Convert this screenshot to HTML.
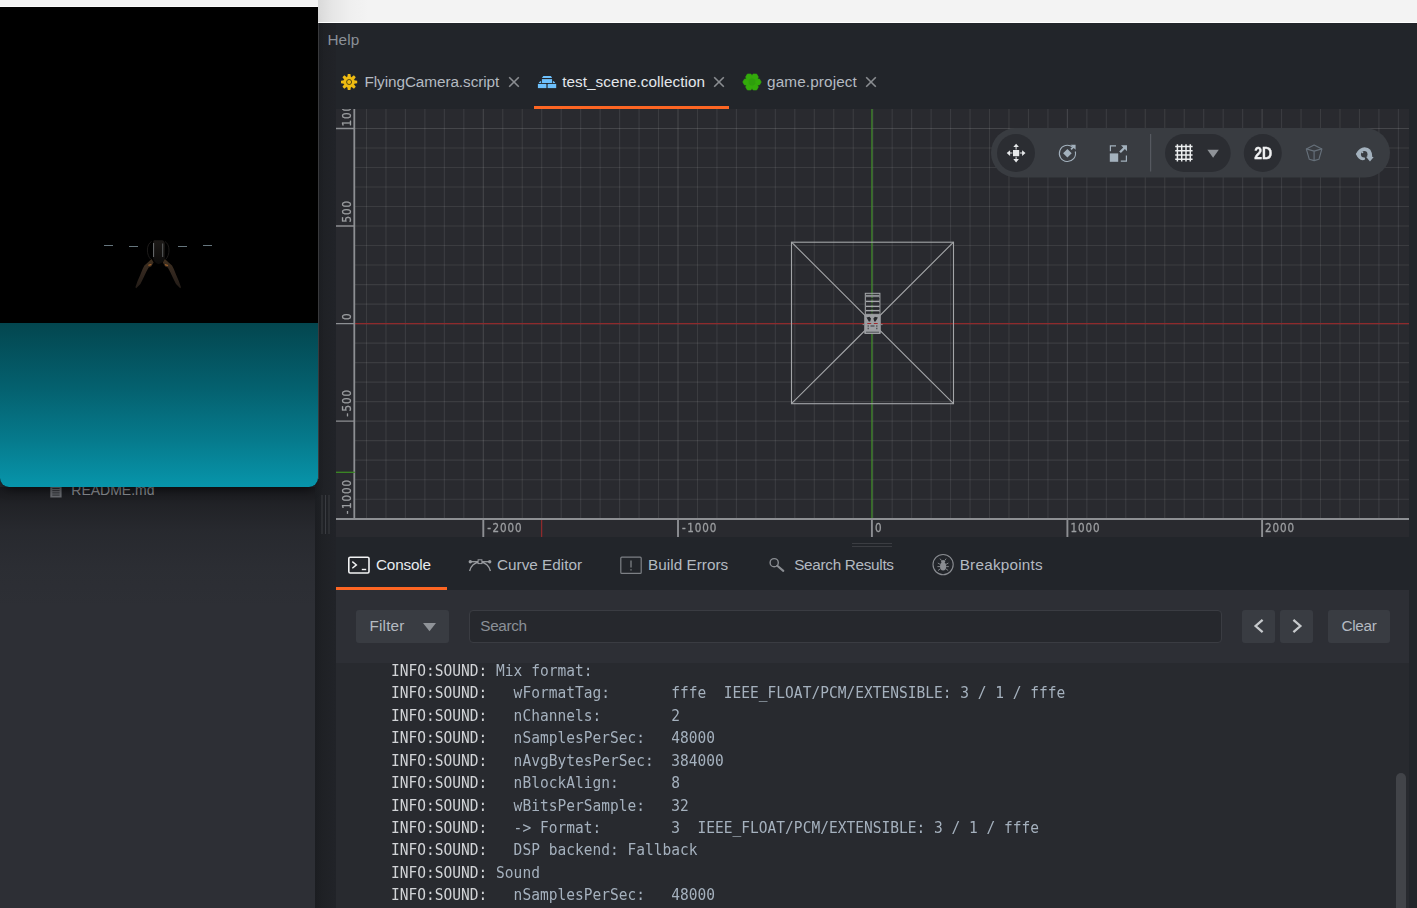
<!DOCTYPE html>
<html lang="en">
<head>
<meta charset="utf-8">
<title>Defold Editor</title>
<style>
html,body{margin:0;padding:0;}
body{width:1417px;height:908px;overflow:hidden;position:relative;background:#22252a;font-family:"Liberation Sans",sans-serif;color:#b4bac1;}
.abs{position:absolute;}
#topL{left:0;top:0;width:318px;height:7px;background:#f3f3f3;border-bottom:1px solid #fbfbfb;box-sizing:border-box;}
#topR{left:318px;top:0;width:1099px;height:23px;background:linear-gradient(90deg,#d9d9d9 0,#e6e6e6 14px,#efefef 32px,#f3f3f3 50px);border-bottom:1px solid #fff;box-sizing:border-box;}
#leftPanel{left:0;top:487px;width:315px;height:421px;background:#2d2f35;}
#leftShadow{left:0;top:487px;width:315px;height:120px;background:linear-gradient(180deg,rgba(20,21,24,.85) 0,rgba(24,25,28,.58) 18px,rgba(28,30,34,.32) 45px,rgba(30,32,36,.12) 80px,rgba(45,47,53,0) 120px);}
#gameWin{left:0;top:7px;width:318px;height:480px;background:#000;border-radius:0 0 9px 9px;overflow:hidden;box-shadow:0 8px 10px -6px rgba(0,0,0,.55);}
#gameWin .sea{position:absolute;left:0;top:316px;width:318px;height:164px;background:linear-gradient(180deg,#03464f 0,#04616f 40%,#067b8d 72%,#0795ab 100%);}
#edgeL{left:315px;top:22px;width:21px;height:886px;background:linear-gradient(90deg,#1b1d21 0,#1f2125 8px,#212328 20px);}
#menu{left:327.4px;top:31px;font-size:15.3px;letter-spacing:.1px;color:#8b9097;line-height:17px;}
.tab{position:absolute;top:73px;font-size:15.3px;line-height:18px;white-space:nowrap;color:#b4bac1;}
.tab.sel{color:#e4e8ec;}
.x{position:absolute;top:76px;width:12px;height:12px;}
#tabline{left:534px;top:106px;width:195px;height:3px;background:#fd6623;}
#scene{left:336px;top:109px;width:1073px;height:428px;background:#292a2f;overflow:hidden;}
.btab{position:absolute;top:556px;font-size:15.3px;line-height:18px;white-space:nowrap;color:#b4bac1;}
.btab.sel{color:#e9ecef;}
#btabline{left:336px;top:587px;width:111px;height:3px;background:#fd6623;}
#ctool{left:336px;top:590px;width:1073px;height:73px;background:#2d2f35;}
#cbody{left:336px;top:663px;width:1073px;height:245px;background:#282a2f;overflow:hidden;}
.btn{position:absolute;background:#393c42;border-radius:3px;color:#b4bac1;font-size:15.3px;}
#search{position:absolute;left:133px;top:20px;width:753px;height:33px;background:#26282d;border:1px solid #3a3c42;border-radius:4px;box-sizing:border-box;}
#console{position:absolute;left:54.7px;top:-3.9px;margin:0;font-family:"DejaVu Sans Mono","Liberation Mono",monospace;font-size:14.55px;line-height:21.4286px;color:#a5b1be;white-space:pre;will-change:transform;transform:scaleY(1.05);transform-origin:0 0;}
#console b{font-weight:normal;color:#d2d4d7;}
#thumb{position:absolute;left:1060px;top:110px;width:10px;height:160px;border-radius:5px;background:#424449;}
</style>
</head>
<body>
<div class="abs" id="leftPanel"></div>
<div class="abs" id="edgeL"></div>
<div class="abs" id="topL"></div>
<div class="abs" id="topR"></div>
<div class="abs" id="menu">Help</div>

<!-- editor tabs -->
<svg class="abs" style="left:340px;top:73px" width="18" height="18" viewBox="0 0 18 18"><g transform="translate(9.1 9)"><g fill="#efbc12"><circle r="5.6"/><g><path d="M-1.8 -5L-1.3 -8.1H1.3L1.8 -5ZM-1.8 5L-1.3 8.1H1.3L1.8 5ZM-5 -1.8L-8.1 -1.3V1.3L-5 1.8ZM5 -1.8L8.1 -1.3V1.3L5 1.8Z"/></g><g transform="rotate(45)"><path d="M-1.8 -5L-1.3 -8.1H1.3L1.8 -5ZM-1.8 5L-1.3 8.1H1.3L1.8 5ZM-5 -1.8L-8.1 -1.3V1.3L-5 1.8ZM5 -1.8L8.1 -1.3V1.3L5 1.8Z"/></g></g><circle r="2.5" fill="none" stroke="#54470f" stroke-width="1"/></g></svg>
<div class="tab" style="left:364.5px;letter-spacing:-.07px">FlyingCamera.script</div>
<svg class="x" style="left:508px" viewBox="0 0 12 12"><path d="M1.2 1.2L10.8 10.8M10.8 1.2L1.2 10.8" stroke="#8a8d91" stroke-width="1.6" fill="none"/></svg>
<svg class="abs" style="left:537px;top:75px" width="20" height="14" viewBox="537 75 20 14"><g fill="#6dc0fc"><path d="M543.3 75.9H550.9L552.1 78H541.9Z"/><rect x="541.9" y="79.1" width="10.2" height="3.9"/><path d="M541.1 81V83H538.7C539.2 82 540 81.2 541.1 81ZM552.9 81V83H555.3C554.8 82 554 81.2 552.9 81Z"/><rect x="537.9" y="83.9" width="8.3" height="4.2"/><rect x="547.9" y="83.9" width="8.3" height="4.2"/><rect x="546.2" y="84.2" width="1.7" height="3.9" opacity=".35"/></g></svg>
<div class="tab sel" style="left:562.2px;letter-spacing:.04px">test_scene.collection</div>
<svg class="x" style="left:713px" viewBox="0 0 12 12"><path d="M1.2 1.2L10.8 10.8M10.8 1.2L1.2 10.8" stroke="#8a8d91" stroke-width="1.6" fill="none"/></svg>
<svg class="abs" style="left:742px;top:72px" width="20" height="20" viewBox="0 0 20 20"><g transform="translate(10 10)"><g fill="#33aa0b" stroke="#33aa0b" stroke-width=".6" stroke-linejoin="round"><polygon points="5.54,3.20 0.00,6.40 -5.54,3.20 -5.54,-3.20 -0.00,-6.40 5.54,-3.20"/><polygon points="9.25,0.00 7.48,3.07 3.93,3.07 2.15,0.00 3.92,-3.07 7.48,-3.07"/><polygon points="6.40,4.94 4.63,8.01 1.08,8.01 -0.70,4.94 1.07,1.86 4.63,1.86"/><polygon points="0.70,4.94 -1.07,8.01 -4.62,8.01 -6.40,4.94 -4.62,1.86 -1.07,1.86"/><polygon points="-2.15,0.00 -3.92,3.07 -7.47,3.07 -9.25,0.00 -7.48,-3.07 -3.92,-3.07"/><polygon points="0.70,-4.94 -1.08,-1.86 -4.63,-1.86 -6.40,-4.94 -4.63,-8.01 -1.08,-8.01"/><polygon points="6.40,-4.94 4.63,-1.86 1.08,-1.86 -0.70,-4.94 1.07,-8.01 4.63,-8.01"/></g><circle r="3.4" fill="#2e9f0c"/></g></svg>
<div class="tab" style="left:767px;letter-spacing:.13px">game.project</div>
<svg class="x" style="left:865px" viewBox="0 0 12 12"><path d="M1.2 1.2L10.8 10.8M10.8 1.2L1.2 10.8" stroke="#8a8d91" stroke-width="1.6" fill="none"/></svg>
<div class="abs" id="tabline"></div>

<!-- scene -->
<div class="abs" id="scene"><svg width="1073" height="428" viewBox="0 0 1073 428" style="position:absolute;left:0;top:0;will-change:transform">
<rect width="1073" height="428" fill="#292a2f"/>
<path d="M30.48 0V410.0M49.95 0V410.0M69.42 0V410.0M88.89 0V410.0M108.36 0V410.0M127.83 0V410.0M166.77 0V410.0M186.24 0V410.0M205.71 0V410.0M225.18 0V410.0M244.65 0V410.0M264.12 0V410.0M283.59 0V410.0M303.06 0V410.0M322.53 0V410.0M361.47 0V410.0M380.94 0V410.0M400.41 0V410.0M419.88 0V410.0M439.35 0V410.0M458.82 0V410.0M478.29 0V410.0M497.76 0V410.0M517.23 0V410.0M556.17 0V410.0M575.64 0V410.0M595.11 0V410.0M614.58 0V410.0M634.05 0V410.0M653.52 0V410.0M672.99 0V410.0M692.46 0V410.0M711.93 0V410.0M750.87 0V410.0M770.34 0V410.0M789.81 0V410.0M809.28 0V410.0M828.75 0V410.0M848.22 0V410.0M867.69 0V410.0M887.16 0V410.0M906.63 0V410.0M945.57 0V410.0M965.04 0V410.0M984.51 0V410.0M1003.98 0V410.0M1023.45 0V410.0M1042.92 0V410.0M1062.39 0V410.0" stroke="rgba(255,255,255,.085)" stroke-width="1.1" fill="none"/>
<path d="M18.3 390.19H1073M18.3 370.68H1073M18.3 351.17H1073M18.3 331.66H1073M18.3 312.15H1073M18.3 292.64H1073M18.3 273.13H1073M18.3 253.62H1073M18.3 234.11H1073M18.3 195.09H1073M18.3 175.58H1073M18.3 156.07H1073M18.3 136.56H1073M18.3 117.05H1073M18.3 97.54H1073M18.3 78.03H1073M18.3 58.52H1073M18.3 39.01H1073" stroke="rgba(255,255,255,.085)" stroke-width="1.1" fill="none"/>
<path d="M147.30 0V410.0M342.00 0V410.0M536.70 0V410.0M731.40 0V410.0M926.10 0V410.0" stroke="rgba(255,255,255,.135)" stroke-width="1.1" fill="none"/>
<path d="M18.3 409.70H1073M18.3 214.60H1073M18.3 19.50H1073" stroke="rgba(255,255,255,.135)" stroke-width="1.1" fill="none"/>
<path d="M18.3 214.6H1073" stroke="#8e2a2c" stroke-width="1.2"/>
<path d="M535.9 0V410.0" stroke="#3c8a24" stroke-width="1.2"/>
<g stroke="#a3a5a8" stroke-width="1.1" fill="none"><rect x="455.5" y="133.2" width="162.0" height="161.5"/><path d="M455.5 133.2L617.5 294.7M617.5 133.2L455.5 294.7"/></g>
<g id="model" transform="translate(-336 -109)">
<rect x="865.3" y="293.3" width="14.6" height="21" fill="rgba(163,165,168,0.10)" stroke="#a6a8ab" stroke-width="1"/>
<path d="M866 295.9H879.5" stroke="#8d8f93" stroke-width="1.9" fill="none"/>
<path d="M866 301.3H879.5M866 306.3H879.5M866 310.6H879.5" stroke="#a6a8ab" stroke-width="1.3" fill="none"/>
<path d="M866 298.8H879.5M866 304H879.5M866 308.6H879.5M866 312.7H879.5" stroke="#202226" stroke-width="1.5" opacity=".75" fill="none"/>
<rect x="864.2" y="314.6" width="16.6" height="19.3" rx="1" fill="#9c9ea2"/>
<path d="M866.5 317.6L869.5 316.8L871 318.5L870.2 321.6L868.8 321.4ZM877.9 317.6L874.9 316.8L873.4 318.5L874.2 321.6L875.6 321.4Z" fill="#26282c"/>
<path d="M867.3 323.5H871.2M873.8 323.5H877.7" stroke="#a02a2e" stroke-width="1.2"/>
<path d="M867.5 326H869M870.5 326H874.5M876 326H877.5M867.5 328.5H869M876 328.5H877.5" stroke="#55575c" stroke-width="1.3"/>
<path d="M866 332.2H879" stroke="#3a3c41" stroke-width=".8"/>
<path d="M862.6 324.6H864.2M880.8 324.6H882.6" stroke="#8c8e92" stroke-width="1"/>
</g>

<rect x="0" y="0" width="18.3" height="428" fill="#292a2f"/>
<rect x="0" y="410.0" width="1073" height="18.0" fill="#292a2f"/>
<path d="M18.3 0V411.0M0 410.0H1073" stroke="#8d8f93" stroke-width="1.8" fill="none"/>
<path d="M0 19.50H18.3M0 117.05H18.3M0 214.60H18.3M0 312.15H18.3M0 409.70H18.3" stroke="#8d8f93" stroke-width="1.4" fill="none"/>
<path d="M147.30 410.0V428M342.00 410.0V428M535.90 410.0V428M731.40 410.0V428M926.10 410.0V428" stroke="#8d8f93" stroke-width="1.9" fill="none"/>
<path d="M0 363.3H18.8" stroke="#3c8a24" stroke-width="1.3"/>
<path d="M205.6 411.0V428" stroke="#8e2a2c" stroke-width="1.3"/>
<g font-family="'DejaVu Sans','Liberation Sans',sans-serif" font-size="11.8" fill="#9c9ea1" stroke="#9c9ea1" stroke-width=".3" letter-spacing="1.02">
<text transform="translate(151.2 423.1) scale(.88 1)">-<tspan dx="0.7">2000</tspan></text>
<text transform="translate(345.9 423.1) scale(.88 1)">-<tspan dx="0.7">1000</tspan></text>
<text transform="translate(538.9 423.1) scale(.88 1)">0</text>
<text transform="translate(734.4 423.1) scale(.88 1)">1000</text>
<text transform="translate(929.1 423.1) scale(.88 1)">2000</text>
<text transform="translate(15.3 17.6) rotate(-90) scale(.88 1)">1000</text>
<text transform="translate(15.3 113.5) rotate(-90) scale(.88 1)">500</text>
<text transform="translate(15.3 211.0) rotate(-90) scale(.88 1)">0</text>
<text transform="translate(15.3 307.8) rotate(-90) scale(.88 1)">-<tspan dx="0.7">500</tspan></text>
<text transform="translate(15.3 405.3) rotate(-90) scale(.88 1)">-<tspan dx="0.7">1000</tspan></text>
</g>
</svg><svg width="1073" height="428" viewBox="336 109 1073 428" style="position:absolute;left:0;top:0">
<rect x="991" y="128" width="399" height="49.5" rx="24.75" fill="#393c41"/>
<circle cx="1016" cy="153" r="19" fill="#2b2d32"/>
<!-- move -->
<g fill="#e6e8ea" stroke="none">
<rect x="1013" y="150" width="6.2" height="6.2"/>
<path d="M1016.1 143.700L1018.900 147.100H1016.600V149.400H1015.600V147.100H1013.300Z"/>
<path d="M1016.100 162.500L1018.900 159.100H1016.600V156.800H1015.600V159.100H1013.300Z"/>
<path d="M1006.700 153.100L1010.100 150.300V152.600H1012.400V153.600H1010.100V155.900Z"/>
<path d="M1025.500 153.100L1022.100 150.300V152.600H1019.800V153.600H1022.100V155.900Z"/>
</g>
<!-- rotate -->
<g fill="#a3b1bd">
<path d="M1072.6 147.2A8.1 8.1 0 1 0 1075.3 151.5" fill="none" stroke="#a3b1bd" stroke-width="1.1"/>
<path d="M1067.4 148.9L1071.7 153.2L1067.4 157.5L1063.1 153.2Z"/>
<path d="M1070.6 144.8H1075.6V149.8L1073.7 147.900L1071.6 150L1070.4 148.800L1072.5 146.700Z"/>
</g>
<!-- scale -->
<g fill="#a3b1bd">
<rect x="1109.8" y="153.4" width="8.4" height="8.4"/>
<path d="M1109.8 151.2V145.2H1116V146.4H1111V151.2ZM1127 155.5V161.8H1120.8V160.6H1125.8V155.5Z"/>
<path d="M1121 145.2H1127V151.2L1124.9 149.1L1120.9 153.1L1119.2 151.4L1123.2 147.4Z"/>
</g>
<rect x="1150" y="134" width="1.2" height="37.5" fill="#565960"/>
<rect x="1165" y="134" width="65.7" height="38" rx="19" fill="#2b2d32"/>
<path d="M1177.4 144.2V161.4M1181.7 144.2V161.4M1186 144.2V161.4M1190.3 144.2V161.4M1175.2 146.4H1192.6M1175.2 150.7H1192.6M1175.2 155H1192.6M1175.2 159.3H1192.6" stroke="#eceeef" stroke-width="1.5" fill="none"/>
<path d="M1207.4 149.8H1218.8L1213.1 157.8Z" fill="#8f9398"/>
<circle cx="1262.8" cy="153" r="19" fill="#2b2d32"/>
<text x="1254.3" y="159.2" font-family="'Liberation Sans',sans-serif" font-weight="bold" font-size="15.8" fill="#f0f1f2" stroke="#f0f1f2" stroke-width=".35" textLength="18" lengthAdjust="spacingAndGlyphs">2D</text>
<!-- cube -->
<g fill="none" stroke="#66707a" stroke-width="1.15" stroke-linejoin="round">
<path d="M1306.300 148.900L1314.100 145.100L1321.900 148.900L1318.900 159.300L1314.100 160.600L1309.300 159.300Z"/>
<path d="M1306.300 148.900L1314.100 151.100L1321.900 148.900M1314.100 151.100V160.600"/>
</g>
<!-- eye rotate -->
<g>
<path d="M1355.800 153.900Q1359.400 147.200 1364.600 147.200Q1372.200 147.400 1372.300 157.100L1367 157.100Q1365.600 160.200 1362.600 160.200Q1358.400 159.600 1355.800 153.900Z" fill="#a3b1bd"/>
<circle cx="1364.200" cy="154.300" r="3.250" fill="#393c41"/>
<path d="M1364.600 156.700H1367.600L1367 160.700H1365.500Z" fill="#393c41"/>
<circle cx="1362.300" cy="152.200" r="1.050" fill="#a3b1bd"/>
<path d="M1366.200 157.100H1373.700L1369.950 161.500Z" fill="#a3b1bd"/>
</g>
</svg>
</div>

<!-- bottom tabs -->
<div class="abs" style="left:852px;top:543px;width:40px;height:1px;background:#3b3d42"></div>
<div class="abs" style="left:852px;top:546px;width:40px;height:1px;background:#3b3d42"></div>
<svg class="abs" style="left:346px;top:554px" width="26" height="22" viewBox="346 554 26 22"><rect x="348.8" y="557.2" width="20.2" height="15.8" rx="1.4" fill="none" stroke="#f2f3f4" stroke-width="1.6"/><path d="M352.3 561.6L356.4 564.9L352.3 568.2" fill="none" stroke="#f2f3f4" stroke-width="1.4"/><path d="M361.8 569.5H366.2" stroke="#f2f3f4" stroke-width="1.4"/></svg>
<div class="btab sel" style="left:376px;letter-spacing:-.2px">Console</div>
<svg class="abs" style="left:466px;top:556px" width="28" height="18" viewBox="466 556 28 18"><g fill="none" stroke="#999ca0" stroke-width="1.3"><path d="M469.6 571C470.6 566.5 474.5 562 480 562C485.5 562 489.4 566.5 490.4 571"/><path d="M470.5 561.7H489.5"/></g><circle cx="470.3" cy="561.7" r="1.7" fill="#999ca0"/><circle cx="489.7" cy="561.7" r="1.7" fill="#999ca0"/><rect x="478.1" y="559.8" width="3.8" height="3.8" fill="#22252a" stroke="#999ca0" stroke-width="1"/></svg>
<div class="btab" style="left:497px;letter-spacing:0px">Curve Editor</div>
<svg class="abs" style="left:618px;top:554px" width="26" height="22" viewBox="618 554 26 22"><rect x="620.8" y="557.2" width="20.4" height="16.2" rx="1" fill="none" stroke="#7d8085" stroke-width="1.2"/><path d="M631 560.6V567.6M631 569.2V570.6" stroke="#7d8085" stroke-width="1.3"/></svg>
<div class="btab" style="left:648px;letter-spacing:.03px">Build Errors</div>
<svg class="abs" style="left:767px;top:555px" width="20" height="20" viewBox="767 555 20 20"><circle cx="774.2" cy="562.7" r="4.1" fill="none" stroke="#8a8d92" stroke-width="1.4"/><path d="M777.3 565.8L783.3 570.9" stroke="#8a8d92" stroke-width="2.1" stroke-linecap="round"/></svg>
<div class="btab" style="left:794.2px;letter-spacing:-.3px">Search Results</div>
<svg class="abs" style="left:931px;top:553px" width="24" height="24" viewBox="931 553 24 24"><circle cx="943.1" cy="564.6" r="10.1" fill="none" stroke="#8a8d92" stroke-width="1.1"/><g fill="#8a8d92"><ellipse cx="943.1" cy="566.4" rx="3.1" ry="4.1"/><ellipse cx="943.1" cy="561.6" rx="2.1" ry="1.6"/></g><path d="M941.5 560.6L940 558.6M944.7 560.6L946.2 558.6M940.2 564.4L937.8 563M946 564.4L948.4 563M940 566.6H937.4M946.2 566.6H948.8M940.3 568.8L938 570.6M945.9 568.8L948.2 570.6" stroke="#8a8d92" stroke-width=".9" fill="none"/></svg>
<div class="btab" style="left:959.7px;letter-spacing:.22px">Breakpoints</div>
<div class="abs" id="btabline"></div>

<div class="abs" id="ctool">
  <div class="btn" style="left:20px;top:20px;width:93px;height:33px;"><span style="position:absolute;left:13.4px;top:7px;line-height:18px;letter-spacing:.2px">Filter</span><svg style="position:absolute;left:66px;top:12px" width="15" height="10" viewBox="0 0 15 10"><path d="M1 1H14L7.5 9.3Z" fill="#8f9398"/></svg></div>
  <div id="search"><span style="position:absolute;left:10.3px;top:6px;font-size:15.3px;line-height:18px;color:#8b9097;letter-spacing:-.35px">Search</span></div>
  <div class="btn" style="left:906px;top:20px;width:33px;height:33px;"><svg style="position:absolute;left:10px;top:8px" width="14" height="16" viewBox="0 0 14 16"><path d="M10.6 1.8L3.6 8L10.6 14.2" fill="none" stroke="#c6c9cc" stroke-width="2.3"/></svg></div>
  <div class="btn" style="left:944px;top:20px;width:33px;height:33px;"><svg style="position:absolute;left:10px;top:8px" width="14" height="16" viewBox="0 0 14 16"><path d="M3.4 1.8L10.4 8L3.4 14.2" fill="none" stroke="#c6c9cc" stroke-width="2.3"/></svg></div>
  <div class="btn" style="left:992px;top:20px;width:62px;height:33px;"><span style="position:absolute;left:13.4px;top:7px;line-height:18px;letter-spacing:-.25px">Clear</span></div>
</div>
<div class="abs" id="cbody">
<pre id="console"><b>INFO:SOUND:</b> Mix format:
<b>INFO:SOUND:</b>   wFormatTag:       fffe  IEEE_FLOAT/PCM/EXTENSIBLE: 3 / 1 / fffe
<b>INFO:SOUND:</b>   nChannels:        2
<b>INFO:SOUND:</b>   nSamplesPerSec:   48000
<b>INFO:SOUND:</b>   nAvgBytesPerSec:  384000
<b>INFO:SOUND:</b>   nBlockAlign:      8
<b>INFO:SOUND:</b>   wBitsPerSample:   32
<b>INFO:SOUND:</b>   -&gt; Format:        3  IEEE_FLOAT/PCM/EXTENSIBLE: 3 / 1 / fffe
<b>INFO:SOUND:</b>   DSP backend: Fallback
<b>INFO:SOUND:</b> Sound
<b>INFO:SOUND:</b>   nSamplesPerSec:   48000</pre>
<div id="thumb"></div>
</div>

<!-- readme row (partly covered by the game window) -->
<div class="abs" id="leftShadow"></div>
<svg class="abs" style="left:49px;top:483px" width="14" height="16" viewBox="49 483 14 16"><path d="M50.300 483.500H58.500L61.600 486.600V497.600H50.300Z" fill="#66686d"/><path d="M52.300 488.500H59.600M52.300 490.700H59.600M52.300 492.900H59.600M52.300 495.100H59.600" stroke="#2b2d32" stroke-width="1"/></svg>
<div class="abs" style="left:71.300px;top:481px;font-size:14px;line-height:18px;color:#85888d;letter-spacing:0px">README.md</div>
<svg class="abs" style="left:320px;top:494px" width="12" height="42" viewBox="320 494 12 42"><path d="M322 495V534M325.500 495V534M329 495V534" stroke="#3a3c41" stroke-width="1"/></svg>
<!-- game window -->
<div class="abs" id="gameWin"><div class="sea"></div>
<svg style="position:absolute;left:0;top:0" width="318" height="480" viewBox="0 7 318 480">
<defs><linearGradient id="body" x1="0" y1="0" x2="0" y2="1"><stop offset="0" stop-color="#1d1a18"/><stop offset="1" stop-color="#0c0b0a"/></linearGradient>
<linearGradient id="arm" x1="0" y1="0" x2="0" y2="1"><stop offset="0" stop-color="#40301f"/><stop offset=".4" stop-color="#34281f"/><stop offset="1" stop-color="#231c17"/></linearGradient></defs>
<path d="M104 245.5H113M203 245.5H212M129 246.5H138M178 246.5H187" stroke="#66767e" stroke-width="1.1"/>
<path d="M151.5 241.5C149 243 147.4 246 147.4 250C147.4 254 148.6 257 150.5 259M165 241.5C167.500 243 169 246 169 250C169 254 167.800 257 166 259" fill="none" stroke="#1c1a19" stroke-width="1"/>
<path d="M154 240.200H162.500C164.500 241 165 243 165 246V258C164 261.500 161 264 158 264C155.500 263 153.500 261 153 258V244C153 242 153.300 241 154 240.200Z" fill="url(#body)"/>
<path d="M153.600 243V257" stroke="#8b8f92" stroke-width="1" opacity=".75"/>
<path d="M162.700 243.500V257" stroke="#7b7f82" stroke-width="1" opacity=".7"/>
<path d="M151.5 259.0L153.6 262.6L151.2 266.6L148.6 267.6L146.2 272.0L143.4 278.0L140.4 284.0L136.2 288.2L135.4 287.2L137.6 281.0L140.2 275.0L142.6 269.0L144.4 265.4L147.8 262.4Z" fill="url(#arm)"/>
<path d="M164.9 259.0L162.8 262.6L165.2 266.6L167.8 267.6L170.2 272.0L173.0 278.0L176.0 284.0L180.2 288.2L181.0 287.2L178.8 281.0L176.2 275.0L173.8 269.0L172.0 265.4L168.6 262.4Z" fill="url(#arm)"/>
<path d="M148.400 265.400L151.400 264.400M165 264.600L168 265.600" stroke="#a8662c" stroke-width="1.300" opacity=".85"/>
</svg>
</div>
<div class="abs" style="left:318px;top:23px;width:1px;height:456px;background:#38393c"></div>
</body>
</html>
